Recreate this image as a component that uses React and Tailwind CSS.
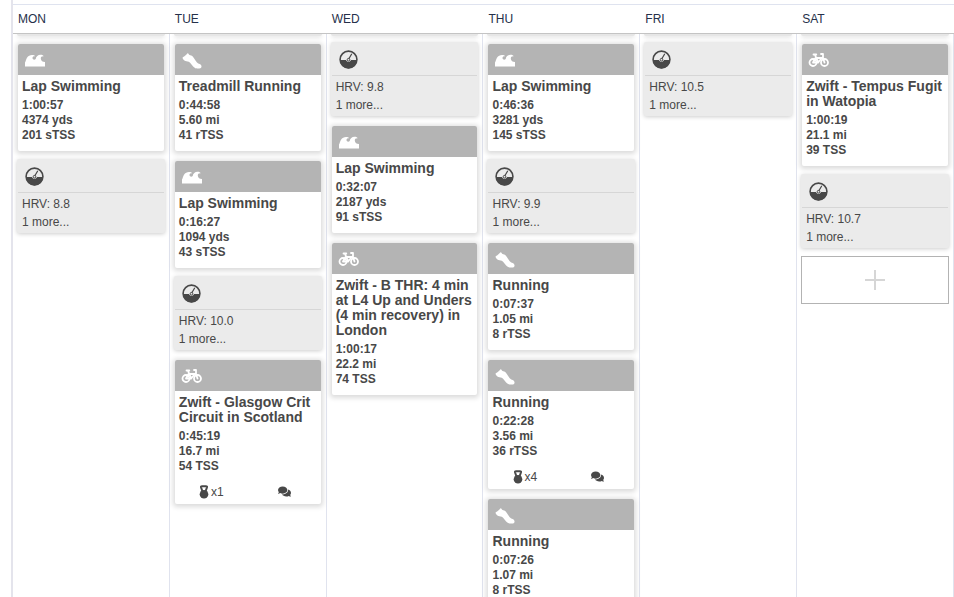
import { FaComments } from 'react-icons/fa';

const week = [
  {
    day: 'MON',
    items: [
      { type: 'swim', title: 'Lap Swimming', stats: ['1:00:57', '4374 yds', '201 sTSS'] },
      { type: 'metric', hrv: '8.8' },
    ],
  },
  {
    day: 'TUE',
    items: [
      { type: 'run', title: 'Treadmill Running', stats: ['0:44:58', '5.60 mi', '41 rTSS'] },
      { type: 'swim', title: 'Lap Swimming', stats: ['0:16:27', '1094 yds', '43 sTSS'] },
      { type: 'metric', hrv: '10.0' },
      { type: 'bike', title: 'Zwift - Glasgow Crit Circuit in Scotland', stats: ['0:45:19', '16.7 mi', '54 TSS'], efforts: 1 },
    ],
  },
  {
    day: 'WED',
    items: [
      { type: 'metric', hrv: '9.8' },
      { type: 'swim', title: 'Lap Swimming', stats: ['0:32:07', '2187 yds', '91 sTSS'] },
      { type: 'bike', title: 'Zwift - B THR: 4 min at L4 Up and Unders (4 min recovery) in London', stats: ['1:00:17', '22.2 mi', '74 TSS'] },
    ],
  },
  {
    day: 'THU',
    items: [
      { type: 'swim', title: 'Lap Swimming', stats: ['0:46:36', '3281 yds', '145 sTSS'] },
      { type: 'metric', hrv: '9.9' },
      { type: 'run', title: 'Running', stats: ['0:07:37', '1.05 mi', '8 rTSS'] },
      { type: 'run', title: 'Running', stats: ['0:22:28', '3.56 mi', '36 rTSS'], efforts: 4 },
      { type: 'run', title: 'Running', stats: ['0:07:26', '1.07 mi', '8 rTSS'] },
    ],
  },
  { day: 'FRI', items: [{ type: 'metric', hrv: '10.5' }] },
  {
    day: 'SAT',
    canAdd: true,
    items: [
      { type: 'bike', title: 'Zwift - Tempus Fugit in Watopia', stats: ['1:00:19', '21.1 mi', '39 TSS'] },
      { type: 'metric', hrv: '10.7' },
    ],
  },
];

export default function App() {
  return (
    <div className="h-screen overflow-hidden bg-white pl-[11px] font-['Liberation_Sans',Arial,sans-serif] text-[#484848]">
      <div className="flex h-full flex-col border-l-2 border-[#e4e4ec] pt-1">
        <header className="grid shrink-0 grid-cols-6 border-t border-b border-t-[#dfe3ef] border-b-[#c4c4c4] bg-white">
          {week.map(({ day }) => (
            <h2 key={day} className="px-[5px] text-xs leading-7 text-[#25304a]">{day}</h2>
          ))}
        </header>

        <main className="grid min-h-0 flex-1 grid-cols-6 overflow-hidden">
          {week.map((column) => (
            <DayColumn key={column.day} column={column} />
          ))}
        </main>
      </div>
    </div>
  );
}

function DayColumn({ column }) {
  return (
    <section aria-label={column.day} className="border-r border-[#e0e3ee] px-1">
      {/* Bottom edge of the previous week's cards */}
      <div className="h-0.5 rounded-b-xs bg-[#e6e6e6] shadow-[0_1px_4px_rgba(0,0,0,0.2)]" />

      <div className="flex flex-col gap-2 pt-1.5">
        {column.items.map((item, i) =>
          item.type === 'metric' ? <MetricCard key={i} item={item} /> : <WorkoutCard key={i} item={item} />
        )}
        {column.canAdd && (
          <button type="button" aria-label="Add workout" className="flex h-12 items-center justify-center border border-[#b3b3b3] bg-white">
            <svg className="size-5" viewBox="0 0 20 20" stroke="#d6d6d6" strokeWidth="2">
              <path d="M10 0v20M0 10h20" />
            </svg>
          </button>
        )}
      </div>
    </section>
  );
}

function WorkoutCard({ item }) {
  const Icon = icons[item.type];

  return (
    <article className="mx-px mt-0.5 rounded-xs bg-white shadow-[0_1px_5px_2px_rgba(0,0,0,0.14)]">
      <div className="flex h-[31px] items-center rounded-t-xs bg-[#b4b4b4] px-1.5 text-white">
        <Icon />
      </div>
      <div className="px-1 pt-1 pb-2 font-bold">
        <h3 className="mb-1 text-sm leading-[15px]">{item.title}</h3>
        {item.stats.map((stat) => (
          <p key={stat} className="text-xs leading-[15px]">{stat}</p>
        ))}
      </div>
      {item.efforts && (
        <div className="grid h-[22px] grid-cols-2 justify-items-center pt-[3px] text-xs">
          <span className="flex items-start gap-0.5 leading-[14px]">
            <KettlebellIcon />x{item.efforts}
          </span>
          <FaComments className="size-[13px]" />
        </div>
      )}
    </article>
  );
}

function MetricCard({ item }) {
  return (
    <article className="rounded-xs bg-[#ebebeb] px-px pb-0.5 shadow-[0_1px_4px_rgba(0,0,0,0.2)]">
      <div className="flex h-[34px] items-center border-b border-[#d6d6d6] px-[7px] pt-px">
        <GaugeIcon />
      </div>
      <div className="px-1 pt-0.5 text-xs leading-[18px]">
        <p>HRV: {item.hrv}</p>
        <p>1 more...</p>
      </div>
    </article>
  );
}

function SwimIcon() {
  return (
    <svg className="h-5 w-[22px]" viewBox="0 0 22 20" fill="currentColor">
      <path d="M1 16.500V12.500C1.800 11.500 2 9.500 3 7.800 4.200 5.900 6 5 8 5c1.600 0 2.800.5 3.200 1.400C9.500 6.200 8.400 6.900 8.500 8.200c.2 1.500 2 2 3.200.8C12 6.500 14 4.800 16.500 4.800c1.700 0 2.900.6 3.300 1.600-1.900-.3-3.100.6-3 2.300.1 2 1.900 3.300 4.200 3.300v4.500z" />
    </svg>
  );
}

function RunIcon() {
  return (
    <svg className="h-5 w-[22px]" viewBox="0 0 22 20" fill="currentColor">
      <path d="M1.700 7.200C3.800 6.300 5 4.800 6.600 3.200c.9-.3 1 1.200 1.900 1.900 1 .6 2.200.3 3.200 1.400 1.700 1.900 2.600 4.100 4.300 6 1.400 1.500 4.200 1.600 4.500 3.500.2 1.700-.8 2.500-2.200 2.500-2 0-3.400.1-4.600-.7-1.400-.9-2.200-2.400-3.400-3.600-.8-.9-1.500-1.900-2.600-2.400C6.300 11.200 4.700 11.500 3.400 10.500 2.300 9.600 1.300 8.600 1.700 7.200z" />
    </svg>
  );
}

function BikeIcon() {
  return (
    <svg className="h-5 w-[22px]" viewBox="0 0 22 20" fill="none" stroke="currentColor" strokeWidth="1.800" strokeLinecap="round" strokeLinejoin="round">
      <circle cx="5" cy="12.500" r="3.500" />
      <circle cx="16.500" cy="12.500" r="3.500" />
      <path d="M5 12.500 7.500 8h6.500l-4 4.500H5M7 5l3.300 7.500M5.500 4.500h2.800M13 4h2v4l1.500 4.500" />
    </svg>
  );
}

function GaugeIcon() {
  return (
    <svg className="size-[19px]" viewBox="0 0 19 19" fill="none" stroke="currentColor">
      <circle cx="9.500" cy="9.500" r="8.400" strokeWidth="1.600" />
      <path d="M1 10h6c.4 1.200 1.300 1.800 2.500 1.800S11.600 11.200 12 10h6a8.500 8.500 0 0 1-17 0z" fill="currentColor" stroke="none" />
      <path d="M10 8.500 12.500 4.200" strokeWidth="1.200" strokeLinecap="round" />
      <circle cx="9.500" cy="9.700" r="1.300" strokeWidth="1" />
    </svg>
  );
}

function KettlebellIcon() {
  return (
    <svg className="h-[14px] w-[10px]" viewBox="0 0 10 14" fill="currentColor">
      <path d="M3.300 6 2 2.300C1.800 1.600 2.200 1.300 3 1.300h4c.8 0 1.200.3 1 1L6.700 6" fill="none" stroke="currentColor" strokeWidth="2" />
      <circle cx="5" cy="9.300" r="4.300" />
    </svg>
  );
}

const icons = { swim: SwimIcon, run: RunIcon, bike: BikeIcon };
